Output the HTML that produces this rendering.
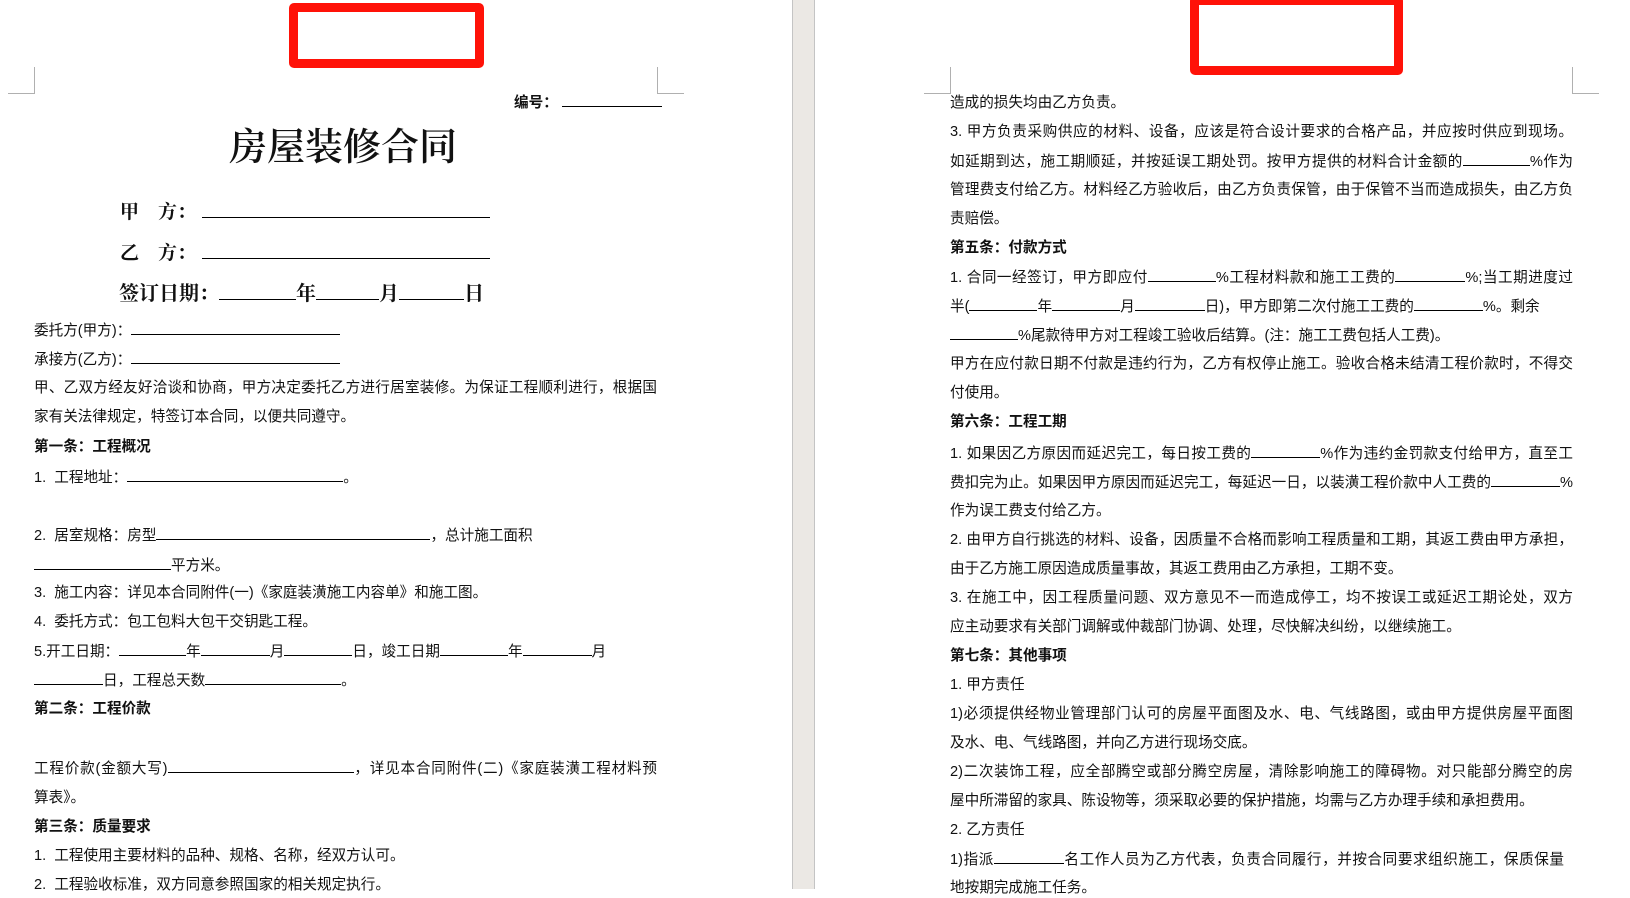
<!DOCTYPE html>
<html><head><meta charset="utf-8"><style>
*{margin:0;padding:0;box-sizing:border-box}
body{width:1630px;height:889px;background:#fff;position:relative;overflow:hidden;font-family:"Liberation Sans","Noto Sans CJK SC",sans-serif;color:#111}
.l{position:absolute;white-space:nowrap;font-size:14.6px;line-height:20px;height:20px}
.j{width:623px;text-align:justify;text-align-last:justify}
.b{font-weight:bold}
.u{display:inline-block;border-bottom:1px solid #000;height:15px;vertical-align:baseline}
.red{position:absolute;border:9px solid #ff1208;border-radius:5px}
.cm{position:absolute;background:#b0b0b0}
.big{position:absolute;white-space:nowrap;font-family:"Liberation Serif","Noto Serif CJK SC",serif;font-weight:bold}
</style></head><body>
<div style="position:absolute;left:792px;top:0;width:23px;height:889px;background:#ebe8e4;border-left:1px solid #c4c4c4;border-right:1px solid #c4c4c4"></div>
<div class="red" style="left:289px;top:3px;width:195px;height:65px"></div>
<div class="red" style="left:1190px;top:-4px;width:213px;height:79px"></div>
<div class="cm" style="left:34px;top:67px;width:1px;height:27px"></div>
<div class="cm" style="left:8px;top:93px;width:27px;height:1px"></div>
<div class="cm" style="left:657px;top:67px;width:1px;height:27px"></div>
<div class="cm" style="left:657px;top:93px;width:27px;height:1px"></div>
<div class="cm" style="left:950px;top:67px;width:1px;height:27px"></div>
<div class="cm" style="left:924px;top:93px;width:27px;height:1px"></div>
<div class="cm" style="left:1572px;top:67px;width:1px;height:27px"></div>
<div class="cm" style="left:1572px;top:93px;width:27px;height:1px"></div>

<div class="l b" style="left:514px;top:92px">编号：<span class="u" style="width:100px;margin-left:4px"></span></div>
<div class="big" style="left:229px;top:124px;font-size:38px;line-height:48px;font-weight:600">房屋装修合同</div>
<div class="big" style="left:120px;top:200px;font-size:19px;line-height:24px">甲　方：<span class="u" style="width:288px;height:18px;margin-left:6px"></span></div>
<div class="big" style="left:120px;top:241px;font-size:19px;line-height:24px">乙　方：<span class="u" style="width:288px;height:18px;margin-left:6px"></span></div>
<div class="big" style="left:119px;top:282px;font-size:20px;line-height:24px">签订日期：<span class="u" style="width:77px;height:18px"></span>年<span class="u" style="width:63px;height:18px"></span>月<span class="u" style="width:65px;height:18px"></span>日</div>

<div class="l" style="left:34px;top:320px">委托方(甲方)：<span class="u" style="width:209px"></span></div>
<div class="l" style="left:34px;top:349px">承接方(乙方)：<span class="u" style="width:209px"></span></div>
<div class="l j" style="left:34px;top:378px">甲、乙双方经友好洽谈和协商，甲方决定委托乙方进行居室装修。为保证工程顺利进行，根据国</div>
<div class="l" style="left:34px;top:407px">家有关法律规定，特签订本合同，以便共同遵守。</div>
<div class="l b" style="left:34px;top:437px">第一条：工程概况</div>
<div class="l" style="left:34px;top:467px">1.&nbsp; 工程地址：<span class="u" style="width:216px"></span>。</div>
<div class="l" style="left:34px;top:525px">2.&nbsp; 居室规格：房型<span class="u" style="width:274px"></span>，总计施工面积</div>
<div class="l" style="left:34px;top:555px"><span class="u" style="width:137px"></span>平方米。</div>
<div class="l" style="left:34px;top:583px">3.&nbsp; 施工内容：详见本合同附件(一)《家庭装潢施工内容单》和施工图。</div>
<div class="l" style="left:34px;top:612px">4.&nbsp; 委托方式：包工包料大包干交钥匙工程。</div>
<div class="l" style="left:34px;top:641px">5.开工日期：<span class="u" style="width:67px"></span>年<span class="u" style="width:69px"></span>月<span class="u" style="width:68px"></span>日，竣工日期<span class="u" style="width:68px"></span>年<span class="u" style="width:69px"></span>月</div>
<div class="l" style="left:34px;top:670px"><span class="u" style="width:69px"></span>日，工程总天数<span class="u" style="width:136px"></span>。</div>
<div class="l b" style="left:34px;top:699px">第二条：工程价款</div>
<div class="l j" style="left:34px;top:758px">工程价款(金额大写)<span class="u" style="width:186px"></span>，详见本合同附件(二)《家庭装潢工程材料预</div>
<div class="l" style="left:34px;top:788px">算表》。</div>
<div class="l b" style="left:34px;top:817px">第三条：质量要求</div>
<div class="l" style="left:34px;top:846px">1.&nbsp; 工程使用主要材料的品种、规格、名称，经双方认可。</div>
<div class="l" style="left:34px;top:875px">2.&nbsp; 工程验收标准，双方同意参照国家的相关规定执行。</div>

<div class="l" style="left:950px;top:93px">造成的损失均由乙方负责。</div>
<div class="l j" style="left:950px;top:122px">3. 甲方负责采购供应的材料、设备，应该是符合设计要求的合格产品，并应按时供应到现场。</div>
<div class="l j" style="left:950px;top:151px">如延期到达，施工期顺延，并按延误工期处罚。按甲方提供的材料合计金额的<span class="u" style="width:67px"></span>%作为</div>
<div class="l j" style="left:950px;top:180px">管理费支付给乙方。材料经乙方验收后，由乙方负责保管，由于保管不当而造成损失，由乙方负</div>
<div class="l" style="left:950px;top:209px">责赔偿。</div>
<div class="l b" style="left:950px;top:238px">第五条：付款方式</div>
<div class="l j" style="left:950px;top:267px">1. 合同一经签订，甲方即应付<span class="u" style="width:68px"></span>%工程材料款和施工工费的<span class="u" style="width:70px"></span>%;当工期进度过</div>
<div class="l" style="left:950px;top:296px">半(<span class="u" style="width:68px"></span>年<span class="u" style="width:68px"></span>月<span class="u" style="width:70px"></span>日)，甲方即第二次付施工工费的<span class="u" style="width:69px"></span>%。剩余</div>
<div class="l" style="left:950px;top:325px"><span class="u" style="width:68px"></span>%尾款待甲方对工程竣工验收后结算。(注：施工工费包括人工费)。</div>
<div class="l j" style="left:950px;top:354px">甲方在应付款日期不付款是违约行为，乙方有权停止施工。验收合格未结清工程价款时，不得交</div>
<div class="l" style="left:950px;top:383px">付使用。</div>
<div class="l b" style="left:950px;top:412px">第六条：工程工期</div>
<div class="l j" style="left:950px;top:443px">1. 如果因乙方原因而延迟完工，每日按工费的<span class="u" style="width:69px"></span>%作为违约金罚款支付给甲方，直至工</div>
<div class="l j" style="left:950px;top:472px">费扣完为止。如果因甲方原因而延迟完工，每延迟一日，以装潢工程价款中人工费的<span class="u" style="width:69px"></span>%</div>
<div class="l" style="left:950px;top:501px">作为误工费支付给乙方。</div>
<div class="l j" style="left:950px;top:530px">2. 由甲方自行挑选的材料、设备，因质量不合格而影响工程质量和工期，其返工费由甲方承担，</div>
<div class="l" style="left:950px;top:559px">由于乙方施工原因造成质量事故，其返工费用由乙方承担，工期不变。</div>
<div class="l j" style="left:950px;top:588px">3. 在施工中，因工程质量问题、双方意见不一而造成停工，均不按误工或延迟工期论处，双方</div>
<div class="l" style="left:950px;top:617px">应主动要求有关部门调解或仲裁部门协调、处理，尽快解决纠纷，以继续施工。</div>
<div class="l b" style="left:950px;top:646px">第七条：其他事项</div>
<div class="l" style="left:950px;top:675px">1. 甲方责任</div>
<div class="l j" style="left:950px;top:704px">1)必须提供经物业管理部门认可的房屋平面图及水、电、气线路图，或由甲方提供房屋平面图</div>
<div class="l" style="left:950px;top:733px">及水、电、气线路图，并向乙方进行现场交底。</div>
<div class="l j" style="left:950px;top:762px">2)二次装饰工程，应全部腾空或部分腾空房屋，清除影响施工的障碍物。对只能部分腾空的房</div>
<div class="l" style="left:950px;top:791px">屋中所滞留的家具、陈设物等，须采取必要的保护措施，均需与乙方办理手续和承担费用。</div>
<div class="l" style="left:950px;top:820px">2. 乙方责任</div>
<div class="l" style="left:950px;top:849px;width:614px;text-align:justify;text-align-last:justify">1)指派<span class="u" style="width:70px"></span>名工作人员为乙方代表，负责合同履行，并按合同要求组织施工，保质保量</div>
<div class="l" style="left:950px;top:878px">地按期完成施工任务。</div>
</body></html>
